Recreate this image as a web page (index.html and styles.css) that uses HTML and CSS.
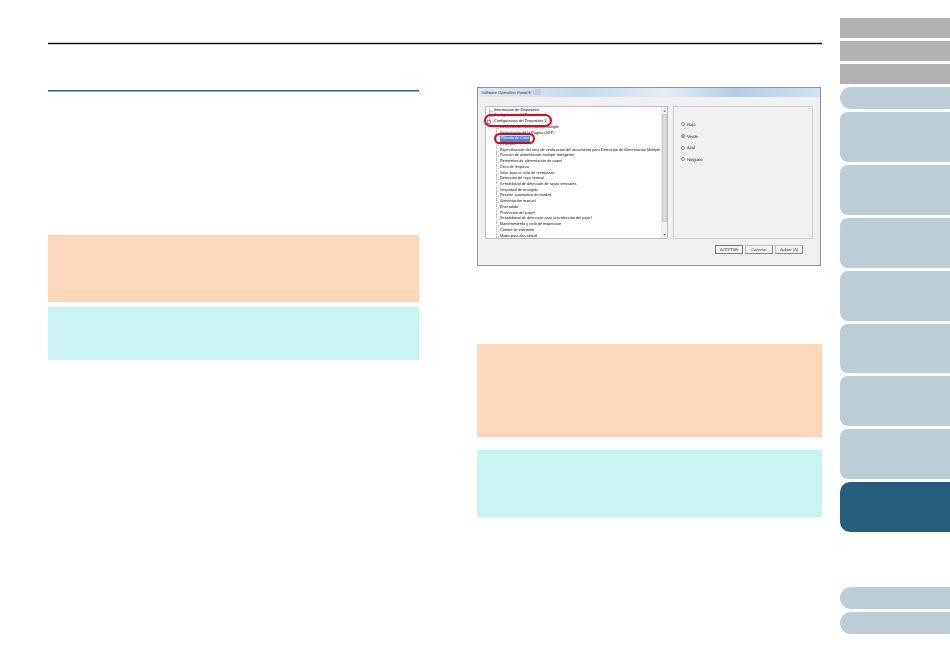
FILE: index.html
```html
<!DOCTYPE html>
<html lang="es">
<head>
<meta charset="utf-8">
<title>Filtrado de Color</title>
<link rel="stylesheet" href="styles.css">
</head>
<body>
<div class="page">
  <main class="content">
    <div class="top-rule"></div>
    <div class="columns">
      <section class="col-left">
        <div class="section-rule"></div>
        <div class="note note-peach note-left-a"></div>
        <div class="note note-cyan note-left-b"></div>
      </section>
      <section class="col-right">
        <div class="window">
          <div class="titlebar">Software Operation Panel fi-<span class="title-hidden"></span></div>
          <div class="window-body">
            <div class="panes">
              <div class="tree">
                <ul class="tree-list">
                  <li class="row top">Información de Dispositivo</li>
                  <li class="row top">Configuración del Dispositivo</li>
                  <li class="row top open"><span class="expander"></span>Configuración del Dispositivo 2</li>
                  <li class="row">Detección de alimentación múltiple</li>
                  <li class="row">Delimitación de la Página (ADF)</li>
                  <li class="row"><span class="selected">Filtrado de Color</span></li>
                  <li class="row">Perfil DC</li>
                  <li class="row">Especificación del área de verificación del documento para Detección de Alimentación Múltiple</li>
                  <li class="row">Función de alimentación múltiple inteligente</li>
                  <li class="row">Reintentos de alimentación de papel</li>
                  <li class="row">Ciclo de limpieza</li>
                  <li class="row">Valor para el ciclo de reemplazo</li>
                  <li class="row">Detección de raya vertical</li>
                  <li class="row">Sensibilidad de detección de rayas verticales</li>
                  <li class="row">Velocidad de recogida</li>
                  <li class="row">Recorte automático de bordes</li>
                  <li class="row">Alimentación manual</li>
                  <li class="row">Encendido</li>
                  <li class="row">Protección del papel</li>
                  <li class="row">Sensibilidad de detección para la protección del papel</li>
                  <li class="row">Mantenimiento y ciclo de inspección</li>
                  <li class="row">Control de inversión</li>
                  <li class="row">Modo para alta altitud</li>
                </ul>
                <div class="scrollbar">
                  <span class="arrow">▴</span>
                  <span class="thumb"></span>
                  <span class="arrow">▾</span>
                </div>
              </div>
              <div class="options">
                <div class="option"><span class="radio"></span>Rojo</div>
                <div class="option"><span class="radio checked"></span>Verde</div>
                <div class="option"><span class="radio"></span>Azul</div>
                <div class="option"><span class="radio"></span>Ninguno</div>
              </div>
            </div>
            <div class="buttons">
              <span class="btn btn-default">ACEPTAR</span>
              <span class="btn">Cancelar</span>
              <span class="btn">Aplicar (A)</span>
            </div>
          </div>
          <span class="ring ring-config"></span>
          <span class="ring ring-filter"></span>
        </div>
        <div class="note note-peach note-right-a"></div>
        <div class="note note-cyan note-right-b"></div>
      </section>
    </div>
  </main>
  <nav class="sidebar">
    <div class="tab tab-gray"></div>
    <div class="tab tab-gray"></div>
    <div class="tab tab-gray"></div>
    <div class="tab tab-pill"></div>
    <div class="tab tab-big"></div>
    <div class="tab tab-big"></div>
    <div class="tab tab-big"></div>
    <div class="tab tab-big"></div>
    <div class="tab tab-big"></div>
    <div class="tab tab-big"></div>
    <div class="tab tab-big"></div>
    <div class="tab tab-big tab-active"></div>
    <div class="tab tab-pill tab-bottom-first"></div>
    <div class="tab tab-pill"></div>
  </nav>
</div>
</body>
</html>
```
FILE: styles.css
```css
* { box-sizing: border-box; }
html, body { margin: 0; padding: 0; background: #fff; }
body { font-family: "Liberation Sans", Arial, sans-serif; text-rendering: geometricPrecision; }

.page { display: flex; width: 950px; height: 671px; overflow: hidden; }
.content { width: 840px; padding: 43px 18px 0 48px; }

.top-rule { height: 1px; background: #000; box-shadow: 0 -0.5px 0 #999, 0 1px 0 #d0d0d0; }
.columns { display: flex; gap: 58px; margin-top: 43px; }

.col-left { width: 371px; padding-top: 3px; }
.section-rule { height: 2px; background: linear-gradient(#265f80 50%, #8fb0c5 50%); }
.col-right { width: 345px; }

.note { width: 100%; }
.note-peach { background: #ffd7b9; }
.note-cyan { background: #c8f4f3; }
.note-left-a { height: 67px; margin-top: 143px; }
.note-left-b { height: 53px; margin-top: 5px; }
.note-right-a { height: 93px; margin-top: 78px; }
.note-right-b { height: 67px; margin-top: 13px; }

.window {
  position: relative;
  height: 179px;
  width: 344px;
  display: flex;
  flex-direction: column;
  background: #f0f0f0;
  border: 1px solid #8a949c;
  color: #333;
}
.titlebar {
  height: 9px;
  padding-left: 3px;
  line-height: 9px;
  font-size: 4.05px;
  white-space: nowrap;
  color: #333;
  background: linear-gradient(90deg, #dfe9f3 0%, #c6d9ea 30%, #e2ecf5 55%, #b5cfe6 75%, #cfe0ef 100%);
}
.title-hidden { display: inline-block; width: 8px; height: 6px; margin-left: 1px; background: #c5cfd9; vertical-align: -1px; }
.window-body { flex: 1; padding: 9px 7px 0 7px; }
.panes { display: flex; gap: 5px; height: 133px; }

.tree {
  position: relative;
  width: 183px;
  display: flex;
  background: #fff;
  border: 1px solid #b9bec2;
  overflow: hidden;
}
.tree-list {
  flex: 1;
  min-width: 0;
  overflow: hidden;
  list-style: none;
  margin: 0;
  padding: 0.7px 0 0 0;
  filter: blur(0.25px);
}
.row {
  position: relative;
  height: 5.72px;
  line-height: 5.72px;
  padding-left: 14px;
  font-size: 3.83px;
  white-space: nowrap;
  color: #111;
}
.row::before {
  content: "";
  position: absolute;
  left: 10px;
  top: 3px;
  width: 3px;
  border-top: 1px dotted #bbb;
}
.row::after {
  content: "";
  position: absolute;
  left: 10px;
  top: 0;
  height: 100%;
  border-left: 1px dotted #bbb;
}
.row.top { padding-left: 8px; }
.row.top::before { left: 3px; width: 4px; }
.row.top::after { left: 3px; }
.expander {
  position: absolute;
  left: 1px;
  top: 1px;
  width: 4px;
  height: 4px;
  background: #fff;
  border: 1px solid #999;
  z-index: 1;
}
.selected { display: inline-block; padding: 0 1px; background: #3a8ee0; color: #fff; }

.scrollbar {
  flex: none;
  width: 6px;
  display: flex;
  flex-direction: column;
  align-items: center;
  background: #f1f1f1;
  border-left: 1px solid #e8e8e8;
}
.arrow { height: 7px; line-height: 7px; font-size: 4px; color: #666; }
.thumb { flex: 1; width: 100%; margin-bottom: 9px; background: #d9dbdd; border: 1px solid #cdcdcd; }

.options {
  width: 140px;
  padding-top: 11.5px;
  padding-left: 7px;
  display: flex;
  flex-direction: column;
  background: #f0f0f0;
  border: 1px solid #c9cfcf;
  filter: blur(0.25px);
}
.option {
  display: flex;
  align-items: center;
  gap: 2px;
  height: 11.7px;
  font-size: 4.2px;
  color: #222;
}
.radio {
  width: 4px;
  height: 4px;
  border-radius: 50%;
  background: #fff;
  border: 0.7px solid #888;
}
.radio.checked { background: #555; box-shadow: inset 0 0 0 0.7px #fff; }

.buttons {
  display: flex;
  justify-content: flex-end;
  gap: 2px;
  padding: 6px 10px 0 0;
  filter: blur(0.2px);
}
.btn {
  width: 28px;
  height: 9px;
  line-height: 8px;
  text-align: center;
  font-size: 3.9px;
  background: #f2f2f2;
  border: 1px solid #c0c0c0;
  border-right-color: #888;
  border-bottom-color: #888;
  white-space: nowrap;
}
.btn-default { border-color: #777; }

.ring { position: absolute; border: 2px solid #e8001c; border-radius: 7px; }
.ring-config { left: 6px; top: 26px; width: 68px; height: 13px; }
.ring-filter { left: 16px; top: 45px; width: 41px; height: 11px; }

.sidebar { width: 110px; padding-top: 18px; display: flex; flex-direction: column; gap: 3px; }
.tab { background: #bccdd8; flex: none; }
.tab-gray { height: 20px; background: #b2b2b2; }
.tab-pill { height: 22px; border-radius: 11px 0 0 11px; }
.tab-big { height: 49.9px; border-radius: 8px 0 0 8px; }
.tab-active { background: #255d7c; border-radius: 10px 0 0 10px; }
.tab-bottom-first { margin-top: 52px; }
```
